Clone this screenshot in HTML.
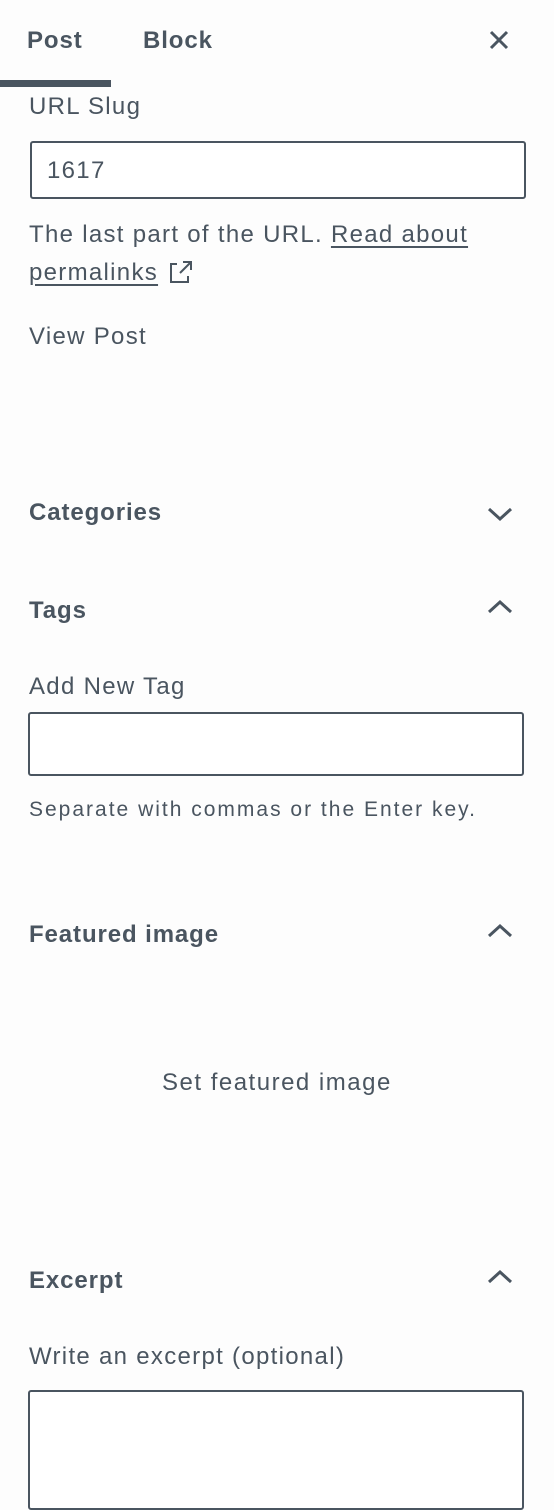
<!DOCTYPE html><html><head><style>
body{margin:0;width:554px;height:1466px;background:#fdfdfd;font-family:"Liberation Sans",sans-serif;color:#4a5560;position:relative;overflow:hidden}
.a{position:absolute;white-space:nowrap;font-size:24px;line-height:28px;letter-spacing:1.3px}
.b{font-weight:bold;letter-spacing:0.9px}
.box{position:absolute;border:2px solid #4a5560;border-radius:3px;box-sizing:border-box;background:#fff}
u{text-underline-offset:4px}
</style></head><body>
<div class="a b" style="left:27px;top:27px">Post</div>
<div class="a b" style="left:143px;top:27px">Block</div>
<svg style="position:absolute;left:488px;top:29px" width="22" height="22" viewBox="0 0 22 22"><path d="M3 3L19 19M19 3L3 19" stroke="#4a5560" stroke-width="3"/></svg>
<div style="position:absolute;left:0;top:80px;width:111px;height:7px;background:#4a5560"></div>
<div class="a" style="left:29px;top:93px">URL Slug</div>
<div class="box" style="left:30px;top:141px;width:496px;height:58px"></div>
<div class="a" style="left:47px;top:157px">1617</div>
<div class="a" style="left:29px;top:221px">The last part of the URL. <u>Read about</u></div>
<div class="a" style="left:29px;top:259px"><u>permalinks</u></div>
<svg style="position:absolute;left:168px;top:259px" width="26" height="26" viewBox="0 0 26 26"><path d="M9 5H3V23H20V17M12 14L23 3M15 3H23V11" fill="none" stroke="#4a5560" stroke-width="2"/></svg>
<div class="a" style="left:29px;top:323px">View Post</div>
<div class="a b" style="left:29px;top:499px">Categories</div>
<svg style="position:absolute;left:487px;top:505px" width="26" height="18"><path d="M2 4L13 14L24 4" fill="none" stroke="#4a5560" stroke-width="3"/></svg>
<div class="a b" style="left:29px;top:597px">Tags</div>
<svg style="position:absolute;left:487px;top:598px" width="26" height="18"><path d="M2 14L13 4L24 14" fill="none" stroke="#4a5560" stroke-width="3"/></svg>
<div class="a" style="left:29px;top:673px">Add New Tag</div>
<div class="box" style="left:28px;top:712px;width:496px;height:64px"></div>
<div class="a" style="left:29px;top:796px;font-size:21px;letter-spacing:2px">Separate with commas or the Enter key.</div>
<div class="a b" style="left:29px;top:921px">Featured image</div>
<svg style="position:absolute;left:487px;top:922px" width="26" height="18"><path d="M2 14L13 4L24 14" fill="none" stroke="#4a5560" stroke-width="3"/></svg>
<div class="a" style="left:162px;top:1069px;letter-spacing:1.5px">Set featured image</div>
<div class="a b" style="left:29px;top:1267px">Excerpt</div>
<svg style="position:absolute;left:487px;top:1268px" width="26" height="18"><path d="M2 14L13 4L24 14" fill="none" stroke="#4a5560" stroke-width="3"/></svg>
<div class="a" style="left:29px;top:1343px">Write an excerpt (optional)</div>
<div class="box" style="left:28px;top:1390px;width:496px;height:120px"></div>
</body></html>
